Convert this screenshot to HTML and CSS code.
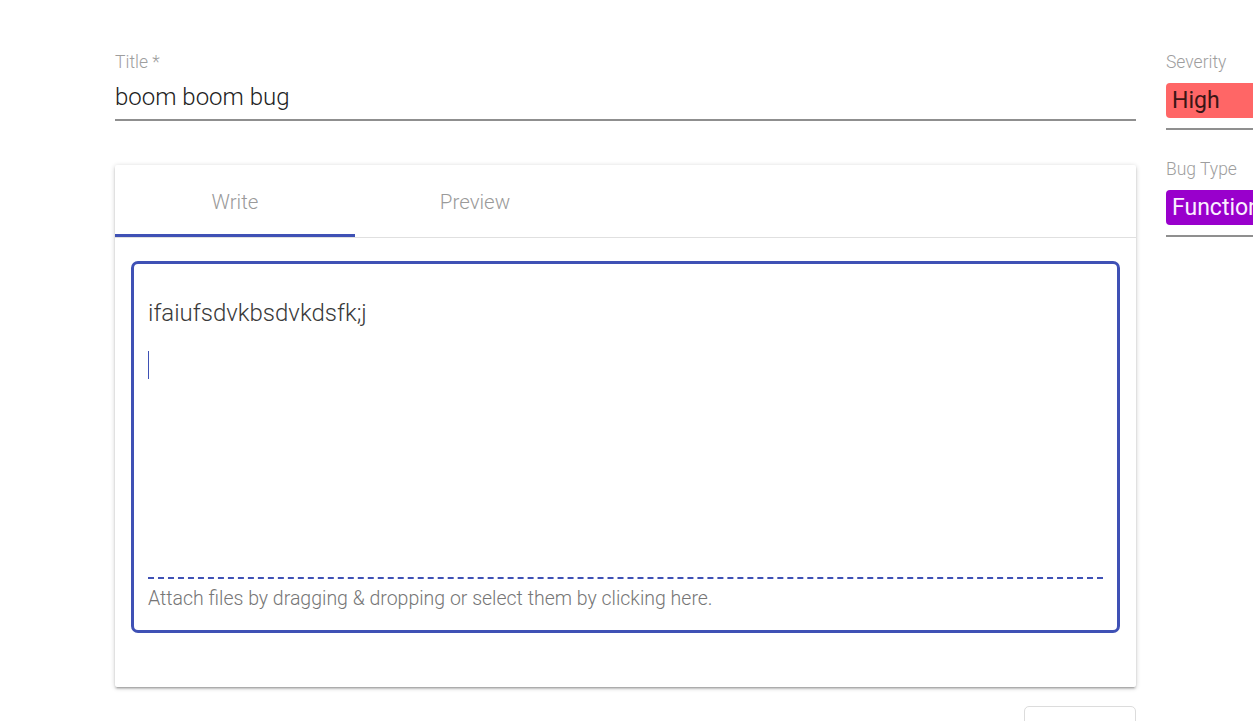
FILE: index.html
```html
<!DOCTYPE html>
<html lang="en">
<head>
<meta charset="utf-8">
<title>New bug</title>
<link rel="stylesheet" href="styles.css">
</head>
<body>
<div class="page">
  <div class="main">
    <div class="field">
      <label class="field-label">Title *</label>
      <div class="text-input">boom boom bug</div>
    </div>

    <div class="paper">
      <div class="tabs">
        <div class="tab tab-active">Write</div>
        <div class="tab">Preview</div>
      </div>
      <div class="panel">
        <div class="editor">
          <div class="write-area">
            <div class="line">ifaiufsdvkbsdvkdsfk;j</div>
            <div class="line"></div>
            <div class="line"><span class="caret"></span></div>
          </div>
          <div class="attach">Attach files by dragging &amp; dropping or select them by clicking here.</div>
        </div>
      </div>
    </div>

    <div class="actions">
      <button class="btn-outline" aria-label="Submit"></button>
    </div>
  </div>

  <div class="side">
    <div class="field side-field">
      <label class="field-label">Severity</label>
      <div class="select"><span class="chip chip-high">High</span></div>
    </div>
    <div class="field side-field side-field-next">
      <label class="field-label">Bug Type</label>
      <div class="select"><span class="chip chip-func">Functional</span></div>
    </div>
  </div>
</div>
</body>
</html>
```

FILE: styles.css
```css
html, body {
  margin: 0;
  padding: 0;
  background: #ffffff;
  overflow: hidden;
}

body {
  font-family: Roboto, "Liberation Sans", Arial, sans-serif;
  color: rgba(0, 0, 0, 0.87);
  width: 1253px;
  height: 721px;
}

.page {
  display: flex;
  gap: 30px;
  padding: 52px 0 0 115px;
  width: 1500px;
}

.main {
  width: 1021px;
  flex-shrink: 0;
}

.side {
  width: 220px;
  flex-shrink: 0;
}

.field-label {
  display: block;
  font-size: 17.5px;
  line-height: 21px;
  font-weight: 300;
  color: #9e9e9e;
}

.text-input {
  margin-top: 4px;
  padding: 5px 0 7px;
  font-size: 24px;
  line-height: 30px;
  font-weight: 300;
  color: #222;
  border-bottom: 2px solid #8f8f8f;
}

.paper {
  margin-top: 44px;
  background: #fff;
  border-radius: 2px;
  box-shadow: 0 1px 5px rgba(0, 0, 0, 0.2), 0 2px 2px rgba(0, 0, 0, 0.14), 0 3px 1px -2px rgba(0, 0, 0, 0.12);
}

.tabs {
  display: flex;
  border-bottom: 1px solid #e0e0e0;
}

.tab {
  width: 240px;
  height: 72px;
  box-sizing: border-box;
  display: flex;
  align-items: center;
  justify-content: center;
  font-size: 20.5px;
  font-weight: 300;
  color: #9a9a9a;
  border-bottom: 3px solid transparent;
  padding-top: 5px;
}

.tab-active {
  border-bottom-color: #3f51b5;
}

.panel {
  padding: 23px 16px 54px;
}

.editor {
  height: 372px;
  box-sizing: border-box;
  border: 3px solid #3f51b5;
  border-radius: 7px;
  padding: 0 14px;
  display: flex;
  flex-direction: column;
}

.write-area {
  flex: 1;
  padding-top: 36px;
}

.line {
  font-size: 24px;
  line-height: 26px;
  font-weight: 300;
  color: #3a3a3a;
  height: 26px;
}

.caret {
  display: inline-block;
  width: 1px;
  height: 28px;
  background: #3f51b5;
  vertical-align: top;
  margin-top: -1px;
}

.attach {
  border-top: 2px dashed #3f51b5;
  padding: 9px 0 20px;
  font-size: 19.5px;
  line-height: 22px;
  font-weight: 300;
  color: #767676;
}

.actions {
  display: flex;
  justify-content: flex-end;
  margin-top: 19px;
}

.btn-outline {
  width: 112px;
  height: 40px;
  border: 1px solid #dcdcdc;
  border-radius: 5px;
  background: #fff;
}

.select {
  margin-top: 10px;
  padding-bottom: 10px;
  border-bottom: 2px solid #8f8f8f;
}

.side-field-next {
  margin-top: 29px;
}

.chip {
  display: block;
  height: 35px;
  line-height: 36px;
  padding: 0 6px;
  border-radius: 4px;
  font-size: 23px;
  font-weight: 400;
  white-space: nowrap;
}

.chip-high {
  background: #ff6666;
  color: #3a1616;
}

.chip-func {
  background: #9900cc;
  color: #fbefff;
}
```
